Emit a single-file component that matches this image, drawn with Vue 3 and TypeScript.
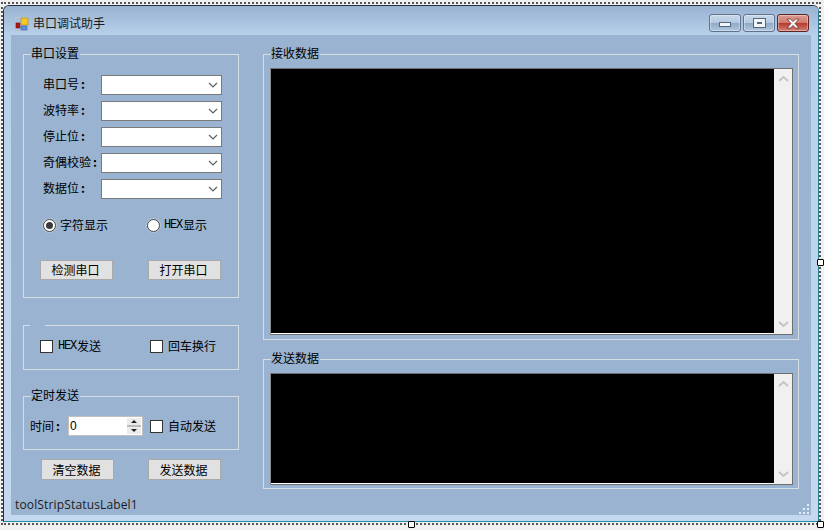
<template>
  <div class="stage">
    <div class="window">
      <div class="titlebar">
        <svg class="appicon" width="14" height="14" viewBox="0 0 14 14">
          <rect x="0.5" y="0.5" width="13" height="13" fill="none" stroke="#b9c4d2" />
          <rect x="1" y="6" width="4" height="5" fill="#b01818" stroke="#7c1010" stroke-width="0.6" />
          <rect x="6" y="1" width="7" height="7" fill="#f6c821" stroke="#a88210" stroke-width="0.6" />
          <rect x="6" y="9" width="6" height="4" fill="#5b8ee0" stroke="#3a65b0" stroke-width="0.6" />
        </svg>
        <span class="title">串口调试助手</span>
        <div class="wbtns">
          <div class="wbtn"><i class="min"></i></div>
          <div class="wbtn"><i class="max"></i></div>
          <div class="wbtn close">
            <svg width="14" height="11" viewBox="0 0 14 11">
              <path d="M1 1h3.500l2.500 2.500 2.500-2.500h3.500l-4 4.500 4 4.500h-3.500l-2.500-2.500-2.500 2.500h-3.500l4-4.500z" fill="#f4f4f4" stroke="#5e2420" stroke-width="0.7" />
            </svg>
          </div>
        </div>
      </div>
      <div class="client">
        <div class="left">
          <fieldset class="group g-port">
            <legend>串口设置</legend>
            <div v-for="r in portRows" :key="r" class="row">
              <label class="rowlabel">{{ r }}<span class="colon">:</span></label>
              <div class="combo">
                <svg width="10" height="6" viewBox="0 0 10 6"><path d="M1 1l4 4 4-4" fill="none" stroke="#606060" stroke-width="1.200" /></svg>
              </div>
            </div>
            <div class="radios">
              <span class="opt opt-a"><span class="radio on"></span>字符显示</span>
              <span class="opt"><span class="radio"></span><span class="mono">HEX</span>显示</span>
            </div>
            <div class="btnrow">
              <button class="btn">检测串口</button>
              <button class="btn">打开串口</button>
            </div>
          </fieldset>

          <fieldset class="group g-hex">
            <legend class="blank"></legend>
            <div class="checks">
              <span class="opt c1"><span class="check"></span><span class="mono">HEX</span>发送</span>
              <span class="opt"><span class="check"></span>回车换行</span>
            </div>
          </fieldset>

          <fieldset class="group g-timer">
            <legend>定时发送</legend>
            <div class="timer">
              <span class="timelabel">时间<span class="colon">:</span></span>
              <div class="spin">
                <span class="spinval">0</span>
                <div class="spinbtns">
                  <span class="up"></span>
                  <span class="down"></span>
                </div>
              </div>
              <span class="opt"><span class="check"></span>自动发送</span>
            </div>
          </fieldset>

          <div class="btnrow bottom">
            <button class="btn">清空数据</button>
            <button class="btn">发送数据</button>
          </div>

          <div class="status">toolStripStatusLabel1</div>
        </div>

        <div class="right">
          <fieldset class="group g-recv">
            <legend>接收数据</legend>
            <div class="textbox recv">
              <div class="screen"></div>
              <div class="vscroll">
                <svg width="11" height="7" viewBox="0 0 11 7"><path d="M1 6l4.500-4 4.500 4" fill="none" stroke="#c4c4c4" stroke-width="2" /></svg>
                <svg width="11" height="7" viewBox="0 0 11 7"><path d="M1 1l4.500 4 4.500-4" fill="none" stroke="#c4c4c4" stroke-width="2" /></svg>
              </div>
            </div>
          </fieldset>
          <fieldset class="group g-send">
            <legend>发送数据</legend>
            <div class="textbox send">
              <div class="screen"></div>
              <div class="vscroll">
                <svg width="11" height="7" viewBox="0 0 11 7"><path d="M1 6l4.500-4 4.500 4" fill="none" stroke="#c4c4c4" stroke-width="2" /></svg>
                <svg width="11" height="7" viewBox="0 0 11 7"><path d="M1 1l4.500 4 4.500-4" fill="none" stroke="#c4c4c4" stroke-width="2" /></svg>
              </div>
            </div>
          </fieldset>
        </div>

        <svg class="grip" width="12" height="12" viewBox="0 0 12 12">
          <g fill="#e8eef6">
            <rect x="9" y="1" width="2" height="2" />
            <rect x="5" y="5" width="2" height="2" />
            <rect x="9" y="5" width="2" height="2" />
            <rect x="1" y="9" width="2" height="2" />
            <rect x="5" y="9" width="2" height="2" />
            <rect x="9" y="9" width="2" height="2" />
          </g>
        </svg>
      </div>
    </div>
    <div class="selection"></div>
    <span class="handle h-right"></span>
    <span class="handle h-bottom"></span>
    <span class="handle h-corner"></span>
  </div>
</template>

<script setup lang="ts">
const portRows: string[] = ['串口号', '波特率', '停止位', '奇偶校验', '数据位']
</script>

<style>
html,
body {
  margin: 0;
  background: #f0f0f0;
}
</style>

<style scoped>
.stage {
  position: relative;
  width: 824px;
  height: 530px;
  overflow: hidden;
  box-sizing: border-box;
  padding: 5px 5px 8px 3px;
  font-family: "Noto Sans CJK SC", "Liberation Sans", sans-serif;
  font-size: 12px;
  color: #000;
  background: #f0f0f0;
}
.window {
  height: 100%;
  box-sizing: border-box;
  display: flex;
  flex-direction: column;
  border: 1px solid #20303c;
  border-right-color: #2f7f92;
  border-bottom-color: #1f8fa8;
  border-radius: 6px 6px 0 0;
  background: linear-gradient(180deg, #b7cfe9, #c4d9f0);
  padding: 0 7px 6px 7px;
}
.titlebar {
  flex: none;
  height: 29px;
  margin: 0 -7px;
  padding: 0 9px 0 11px;
  display: flex;
  align-items: center;
  border-radius: 5px 5px 0 0;
  background: linear-gradient(180deg, #98b2d1, #b8d0ea);
}
.appicon {
  flex: none;
  margin-top: 6px;
}
.title {
  margin-left: 4px;
  margin-top: 5px;
  line-height: 14px;
  color: #1a1a20;
}
.wbtns {
  margin-left: auto;
  margin-top: 5px;
  display: flex;
  gap: 2px;
}
.wbtn {
  width: 32px;
  height: 18px;
  box-sizing: border-box;
  border: 1px solid #5f7391;
  border-radius: 3px;
  display: flex;
  align-items: center;
  justify-content: center;
  box-shadow: inset 0 0 0 1px rgba(255, 255, 255, 0.35);
  background: linear-gradient(180deg, #c8d8ea 0%, #b4c9e0 50%, #8fa9c6 52%, #b2c8de 100%);
}
.wbtn .min {
  display: block;
  width: 10px;
  height: 3px;
  margin-top: 2px;
  background: #f2f4f7;
  border: 1px solid #54657f;
}
.wbtn .max {
  display: block;
  width: 5px;
  height: 2px;
  border: 3px solid #f2f4f7;
  outline: 1px solid #54657f;
  background: #54657f;
}
.wbtn.close {
  border-color: #5e2424;
  background: linear-gradient(180deg, #dc9a90 0%, #d07a6e 48%, #b83a2c 52%, #cf8074 100%);
}
.client {
  position: relative;
  flex: 1;
  min-height: 0;
  background: #99b3d0;
  display: grid;
  grid-template-columns: 252px 1fr;
}
.left {
  display: flex;
  flex-direction: column;
  padding: 19px 0 0 12px;
}
.group {
  margin: 0;
  padding: 0;
  min-width: 0;
  box-sizing: border-box;
  border: 1px solid #d7dde4;
}
.group legend {
  padding: 0 1px 0 0;
  line-height: 12px;
  height: 14px;
  font-size: 12px;
}
.group legend.blank {
  width: 14px;
  height: 0;
  margin-left: -10px;
}
.g-port {
  width: 216px;
  height: 251px;
  padding: 14px 0 0 19px;
  margin-top: -7px;
}
.g-port legend {
  margin-left: -12px;
}
.row {
  display: flex;
  align-items: center;
  height: 20px;
  margin-bottom: 6px;
}
.rowlabel {
  width: 58px;
  padding-bottom: 4px;
  white-space: nowrap;
}
.colon {
  margin-left: 2px;
  font-weight: 700;
}
.combo {
  width: 121px;
  height: 20px;
  box-sizing: border-box;
  background: #fff;
  border: 1px solid #7a7a7a;
  display: flex;
  align-items: center;
  justify-content: flex-end;
  padding-right: 3px;
}
.opt {
  display: inline-flex;
  align-items: center;
  line-height: 14px;
  white-space: nowrap;
}
.mono {
  font-family: "Liberation Mono", monospace;
  font-size: 12px;
  letter-spacing: -1.200px;
  margin-right: 1px;
}
.radios {
  display: flex;
  margin-top: 19px;
}
.opt-a {
  width: 104px;
}
.radio {
  width: 11px;
  height: 11px;
  border: 1px solid #444;
  border-radius: 50%;
  background: #fff;
  position: relative;
  box-shadow: 0 0 0 1px #b5c3d4;
  margin-right: 4px;
}
.radio.on::after {
  content: "";
  position: absolute;
  left: 2px;
  top: 2px;
  width: 7px;
  height: 7px;
  border-radius: 50%;
  background: #3a3a3a;
}
.btnrow {
  display: flex;
  gap: 35px;
}
.g-port .btnrow {
  margin: 28px 0 0 -3px;
}
.btn {
  width: 73px;
  height: 20px;
  padding: 0 2px 0 0;
  box-sizing: border-box;
  border: 1px solid #a9a9a9;
  background: #e1e1e1;
  font: inherit;
  line-height: 16px;
  color: #000;
}
.g-hex {
  width: 216px;
  height: 45px;
  margin-top: 27px;
  padding: 13px 0 0 16px;
}
.checks {
  display: flex;
}
.check {
  width: 11px;
  height: 11px;
  background: #fff;
  border: 1px solid #333;
  flex: none;
  margin-right: 5px;
}
.c1 {
  width: 110px;
}
.g-timer {
  width: 216px;
  height: 61px;
  margin-top: 19px;
  padding: 13px 0 0 6px;
}
.g-timer legend {
  margin-left: 1px;
}
.timer {
  display: flex;
  align-items: center;
}
.timelabel {
  width: 38px;
  padding-bottom: 2px;
  white-space: nowrap;
}
.spin {
  width: 75px;
  height: 20px;
  box-sizing: border-box;
  background: #fff;
  border: 1px solid #c0c0c0;
  display: flex;
  align-items: center;
  justify-content: space-between;
  margin-right: 7px;
}
.spinval {
  padding-left: 1px;
  font-family: "Liberation Sans", sans-serif;
}
.spinbtns {
  width: 14px;
  height: 16px;
  margin-right: 1px;
  display: flex;
  flex-direction: column;
  gap: 2px;
  background: #bcbcbc;
}
.spinbtns span {
  flex: 1;
  background: #ececec;
  position: relative;
}
.spinbtns span::after {
  content: "";
  position: absolute;
  left: 4px;
  border-left: 3px solid transparent;
  border-right: 3px solid transparent;
}
.spinbtns .up::after {
  top: 2px;
  border-bottom: 3px solid #222;
}
.spinbtns .down::after {
  top: 2px;
  border-top: 3px solid #222;
}
.bottom {
  margin: 9px 0 0 18px;
}
.bottom .btn {
  height: 21px;
}
.bottom .btn:last-child {
  margin-left: -1px;
}
.status {
  margin: 17px 0 0 -8px;
  font-family: "Open Sans", "Liberation Sans", sans-serif;
  font-size: 12px;
  letter-spacing: 0.150px;
  line-height: 16px;
  color: #1c1c1c;
}
.right {
  display: flex;
  flex-direction: column;
  padding: 12px 0 0 0;
}
.g-recv,
.g-send {
  width: 536px;
  padding: 7px 0 0 6px;
}
.g-recv legend,
.g-send legend {
  margin-left: 1px;
}
.g-recv {
  height: 293px;
}
.g-send {
  height: 137px;
  margin-top: 12px;
}
.textbox {
  width: 523px;
  box-sizing: border-box;
  border: 1px solid #6e6e6e;
  border-left-color: #8a8a8a;
  background: #fff;
  display: flex;
}
.recv {
  height: 267px;
}
.send {
  height: 112px;
}
.screen {
  flex: 1;
  margin-bottom: 1px;
  background: #000;
}
.vscroll {
  width: 18px;
  background: #f0f0f0;
  display: flex;
  flex-direction: column;
  justify-content: space-between;
  align-items: center;
  padding: 6px 0;
  box-sizing: border-box;
}
.grip {
  position: absolute;
  right: 1px;
  bottom: 0;
}
.selection {
  position: absolute;
  left: 1px;
  top: 2px;
  right: 3px;
  bottom: 5px;
  border: 2px dotted #555;
  pointer-events: none;
}
.handle {
  position: absolute;
  width: 5px;
  height: 5px;
  border: 1px solid #000;
  background: #fff;
  border-radius: 1px;
}
.h-right {
  left: 817px;
  top: 259px;
}
.h-bottom {
  left: 408px;
  top: 521px;
}
.h-corner {
  left: 817px;
  top: 521px;
}
</style>
